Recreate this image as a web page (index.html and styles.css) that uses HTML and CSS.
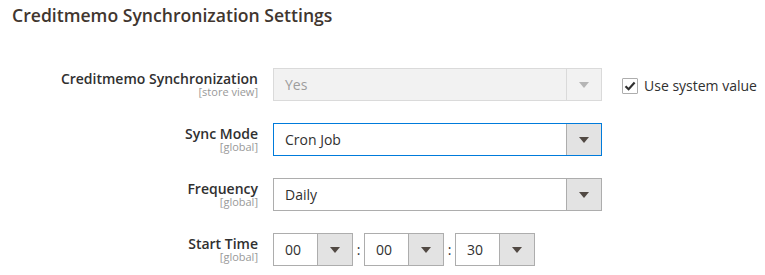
FILE: index.html
```html
<!DOCTYPE html>
<html>
<head>
<meta charset="utf-8">
<link rel="stylesheet" href="styles.css">
</head>
<body>
<section class="section">
  <h2 class="title">Creditmemo Synchronization Settings</h2>
  <div class="rows">
    <div class="row">
      <div class="label">
        <span class="name">Creditmemo Synchronization</span>
        <span class="scope">[store view]</span>
      </div>
      <div class="select disabled">
        <span class="value">Yes</span>
        <span class="arrow"><i class="tri"></i></span>
      </div>
      <label class="use-default">
        <span class="check"><svg width="12" height="10" viewBox="0 0 12 10"><path d="M1.5 5.2 L4.6 8.2 L10.6 1.6" fill="none" stroke="#303030" stroke-width="2.2"/></svg></span>
        <span class="use-text">Use system value</span>
      </label>
    </div>
    <div class="row">
      <div class="label">
        <span class="name">Sync Mode</span>
        <span class="scope">[global]</span>
      </div>
      <div class="select focused">
        <span class="value">Cron Job</span>
        <span class="arrow"><i class="tri"></i></span>
      </div>
    </div>
    <div class="row">
      <div class="label">
        <span class="name">Frequency</span>
        <span class="scope">[global]</span>
      </div>
      <div class="select">
        <span class="value">Daily</span>
        <span class="arrow"><i class="tri"></i></span>
      </div>
    </div>
    <div class="row">
      <div class="label">
        <span class="name">Start Time</span>
        <span class="scope">[global]</span>
      </div>
      <div class="time">
        <div class="select small">
          <span class="value">00</span>
          <span class="arrow"><i class="tri"></i></span>
        </div>
        <span class="colon">:</span>
        <div class="select small">
          <span class="value">00</span>
          <span class="arrow"><i class="tri"></i></span>
        </div>
        <span class="colon">:</span>
        <div class="select small">
          <span class="value">30</span>
          <span class="arrow"><i class="tri"></i></span>
        </div>
      </div>
    </div>
  </div>
</section>
</body>
</html>
```
FILE: styles.css
```css
html, body {
  margin: 0;
  padding: 0;
  background: #fff;
}
body {
  font-family: "Open Sans", "Liberation Sans", sans-serif;
  color: #303030;
  font-size: 14px;
}
.section {
  padding: 4px 0 0 12px;
}
.title {
  margin: 0;
  font-size: 17.6px;
  font-weight: 600;
  color: #41362f;
  line-height: 22px;
}
.rows {
  margin-top: 42px;
  display: flex;
  flex-direction: column;
  gap: 22px;
}
.row {
  display: flex;
  align-items: flex-start;
  height: 33px;
}
.label {
  flex: 0 0 auto;
  width: 246px;
  display: flex;
  flex-direction: column;
  align-items: flex-end;
  padding-top: 3px;
  margin-right: 15px;
}
.name {
  font-weight: 600;
  font-size: 14px;
  line-height: 16px;
  color: #303030;
  white-space: nowrap;
}
.scope {
  font-size: 11px;
  line-height: 10px;
  color: #999;
  white-space: nowrap;
}
.select {
  flex: 0 0 auto;
  box-sizing: border-box;
  width: 329px;
  height: 33px;
  border: 1px solid #adadad;
  background: #fff;
  display: flex;
  align-items: stretch;
}
.select .value {
  flex: 1;
  padding-left: 11px;
  line-height: 31px;
  font-size: 14px;
  color: #303030;
}
.select .arrow {
  width: 34px;
  background: #e3e3e3;
  border-left: 1px solid #adadad;
  display: flex;
  align-items: center;
  justify-content: center;
}
.tri {
  width: 0;
  height: 0;
  border-left: 5px solid transparent;
  border-right: 5px solid transparent;
  border-top: 6px solid #514943;
}
.select.focused {
  border-color: #007bdb;
}
.select.disabled {
  background: #f2f2f2;
  border-color: #dadada;
}
.select.disabled .value {
  color: #9d9d9d;
}
.select.disabled .arrow {
  background: #f2f2f2;
  border-left-color: #dadada;
}
.select.disabled .tri {
  border-top-color: #b5b5b5;
}
.use-default {
  flex: 0 0 auto;
  display: flex;
  align-items: center;
  margin-left: 20px;
  margin-top: 8px;
  gap: 6px;
  font-size: 14px;
  line-height: 19px;
  color: #303030;
  white-space: nowrap;
}
.check {
  box-sizing: border-box;
  width: 16px;
  height: 16px;
  border: 1px solid #adadad;
  border-radius: 1px;
  display: flex;
  align-items: center;
  justify-content: center;
  background: #fff;
}
.time {
  display: flex;
  align-items: center;
}
.select.small {
  width: 80px;
}
.select.small .arrow {
  width: 34px;
}
.colon {
  width: 11px;
  text-align: center;
  font-size: 14px;
  color: #303030;
}
```
